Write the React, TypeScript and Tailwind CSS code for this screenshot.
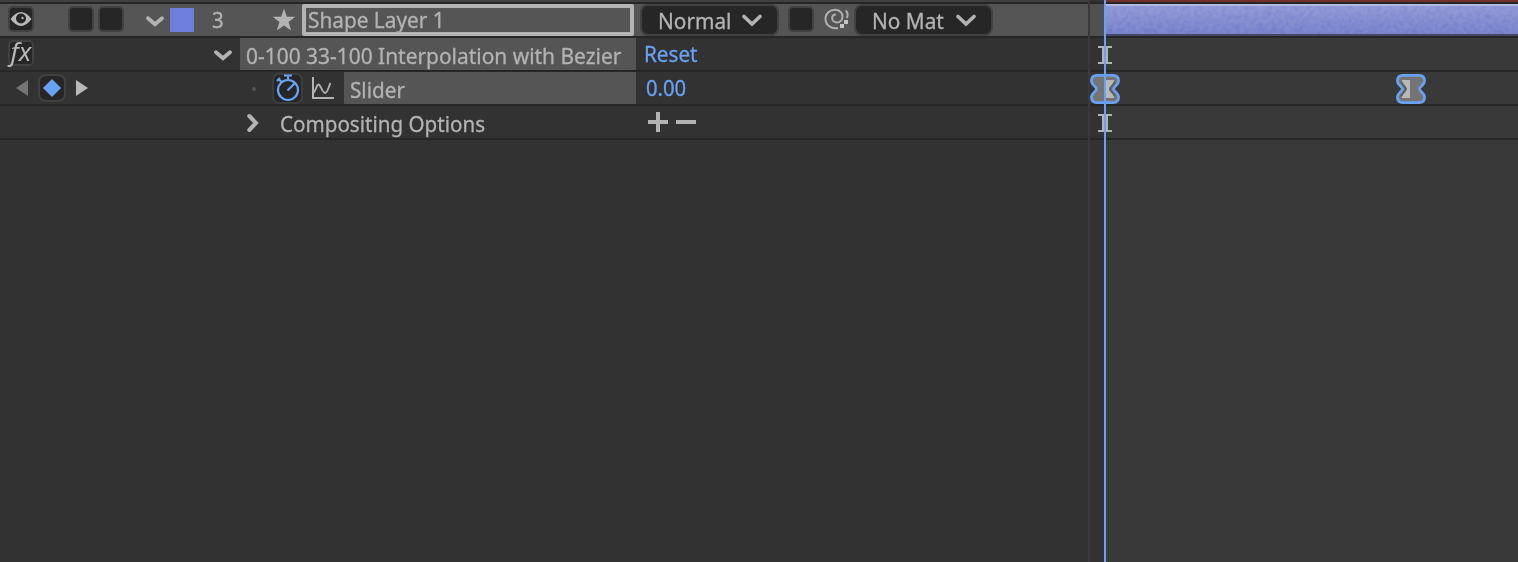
import type { ReactNode } from "react";

const ROW = "flex h-[34px] w-full shrink-0 border-b-2 border-[#262626]";

function Label({ children, className = "" }: { children: ReactNode; className?: string }) {
  return (
    <span className={`block origin-left whitespace-nowrap leading-8 [-webkit-text-stroke:0.3px_currentColor] ${className}`}>
      {children}
    </span>
  );
}

function Switch({ className = "", children }: { className?: string; children?: ReactNode }) {
  return (
    <div className={`flex size-[26px] shrink-0 items-center justify-center rounded-[5px] border-2 border-[#414141] bg-[#262626] ${className}`}>
      {children}
    </div>
  );
}

function Chevron({ className = "", large = false }: { className?: string; large?: boolean }) {
  return (
    <svg
      className={`shrink-0 ${className}`}
      width={large ? 20 : 18}
      height={large ? 13 : 11}
      viewBox={large ? "0 0 20 13" : "0 0 18 11"}
      fill="none"
      stroke="#b3b3b3"
      strokeWidth={large ? 3.6 : 3.8}
      strokeLinecap="round"
    >
      <path d={large ? "M2 2.500 10 10 18 2.500" : "M2 2.300 9 8.300 16 2.300"} />
    </svg>
  );
}

function IBeam() {
  return (
    <svg className="ml-[8px] mt-[8px] shrink-0" width="14" height="18" viewBox="0 0 14 18" fill="#b3b3b3">
      <path d="M0 0h14v2H10v14h4v2H0v-2h4V2H0z" />
    </svg>
  );
}

function Keyframe({ side, className }: { side: "left" | "right"; className: string }) {
  return (
    <svg className={`shrink-0 ${className}`} width="30" height="30" viewBox="0 0 30 30">
      <path
        d="M7 1.400H23Q28.600 1.600 28.600 7C28.600 11 23.500 12.500 23.500 15S28.600 19 28.600 23Q28.600 28.600 23 28.600H7Q1.400 28.600 1.400 23C1.400 19 6.500 17.500 6.500 15S1.400 11 1.400 7Q1.400 1.400 7 1.400Z"
        fill="#747474"
        stroke="#69a2f4"
        strokeWidth="2.800"
      />
      {side === "right" ? (
        <path d="M15 6h9v1.500C24 11 19 12 19 15s5 4 5 7.500V24h-9z" fill="#b9b9b9" />
      ) : (
        <path d="M14 6H6v1.500C6 11 10.500 12 10.500 15S6 19 6 22.500V24h8z" fill="#b9b9b9" />
      )}
      {side === "right" ? (
        <path d="M24.500 8C24 11.500 20.200 12.500 20.200 15s3.800 3.500 4.300 7" fill="none" stroke="#5f5f5f" strokeWidth="2" />
      ) : (
        <path d="M5.500 8C6 11.500 9.800 12.500 9.800 15S6 18.500 5.500 22" fill="none" stroke="#5f5f5f" strokeWidth="2" />
      )}
    </svg>
  );
}

function Dropdown({ text, className, gap }: { text: string; className: string; gap: string }) {
  return (
    <div className={`flex h-[32px] shrink-0 rounded-[8px] border-2 border-[#414141] bg-[#262626] pl-[16px] ${className}`}>
      <div className={gap}>
        <Label className="mt-[-2px] scale-x-[0.945]">{text}</Label>
      </div>
      <Chevron large className="mt-[8px]" />
    </div>
  );
}

function LayerRow() {
  return (
    <div className={`${ROW} bg-[#555555]`}>
      <Switch className="ml-[8px] mt-[2px]">
        <svg width="22" height="16" viewBox="0 0 22 16" className="shrink-0">
          <path d="M.5 8Q11-6 21.500 8 11 22 .5 8Z" fill="#b9b9b9" />
          <circle cx="11" cy="7.500" r="5" fill="#262626" />
          <circle cx="12.500" cy="7" r="1.200" fill="#b9b9b9" />
        </svg>
      </Switch>
      <Switch className="ml-[34px] mt-[2px]" />
      <Switch className="ml-[4px] mt-[2px]" />
      <Chevron className="ml-[22px] mt-[12px]" />
      <div className="ml-[6px] mt-[4px] size-6 shrink-0 bg-[#6e7edc]" />
      <div className="ml-[18px] w-[60px] shrink-0">
        <Label className="mt-[-1px] scale-x-[0.93]">3</Label>
      </div>
      <svg className="mt-[4px] shrink-0" width="24" height="24" viewBox="0 0 24 24" fill="#b3b3b3">
        <path d="m12 .8 2.900 8h8.500l-6.800 5.100 2.500 8.700-7.100-5-7.100 5 2.500-8.700L.6 8.800h8.500z" />
      </svg>
      <div className="ml-[6px] h-8 w-[332px] shrink-0 rounded-[2px] border-4 border-[#b3b3b3] pl-[2px]">
        <Label className="mt-[-5px] scale-x-[0.945]">Shape Layer 1</Label>
      </div>
      <Dropdown text="Normal" className="ml-[6px] w-[139px]" gap="w-[84px]" />
      <Switch className="ml-[9px] mt-[2px]" />
      <svg className="ml-[10px] mt-[4px] shrink-0" width="26" height="24" viewBox="0 0 26 24" fill="none" stroke="#b0b0b0" strokeWidth="2">
        <path d="M14 20C7.500 21.500 1.500 17 1.500 11 1.500 5.500 6 1.700 11 1.700c4.500 0 7.500 3.200 7.500 6.800 0 3.500-2.500 6-5.500 6-2.700 0-4.800-1.800-4.800-4.200 0-2.200 1.500-3.800 3.600-3.800" />
        <path d="M21.800 2.500q3 3.500 1 7.500" />
        <path d="M20 12h4v4h-4zM16 16h4v4h-4z" fill="#c4c4c4" stroke="none" />
      </svg>
      <Dropdown text="No Mat" className="ml-[4px] w-[139px]" gap="w-[84px]" />
    </div>
  );
}

function EffectRow() {
  return (
    <div className={ROW}>
      <Switch className="ml-[8px] mt-[2px]">
        <span className="mt-[-5px] block text-[26px] italic leading-none text-[#b8b8b8]">fx</span>
      </Switch>
      <Chevron className="ml-[180px] mt-[12px]" />
      <div className="ml-[8px] h-8 w-[396px] shrink-0 bg-[#555555] pl-[6px]">
        <Label className="mt-[1px] scale-x-[0.951]">0-100 33-100 Interpolation with Bezier</Label>
      </div>
      <div className="ml-[8px] text-[#69a2f4]">
        <Label className="mt-[-1px] scale-x-[0.94]">Reset</Label>
      </div>
    </div>
  );
}

function SliderRow() {
  return (
    <div className={ROW}>
      <svg className="ml-[16px] mt-[8px] shrink-0" width="12" height="16" fill="#747474"><path d="M12 0v16L0 8z" /></svg>
      <div className="ml-[10px] mt-[2px] flex size-[28px] shrink-0 items-center justify-center rounded-[8px] border-2 border-[#414141] bg-[#262626]">
        <svg width="18" height="18" className="shrink-0" fill="#69a2f4"><path d="M9 0 18 9 9 18 0 9z" /></svg>
      </div>
      <svg className="ml-[10px] mt-[8px] shrink-0" width="12" height="16" fill="#b8b8b8"><path d="M0 0v16l12-8z" /></svg>
      <div className="ml-[164px] mt-[15px] size-1 shrink-0 rounded-full bg-[#555555]" />
      <div className="ml-[16px] mt-px flex size-[31px] shrink-0 items-center justify-center rounded-[7px] border-2 border-[#3d3d3d] bg-[#262626]">
        <svg width="24" height="27" viewBox="0 0 24 27" fill="none" stroke="#69a2f4" strokeWidth="2.200" className="mt-[-2px] shrink-0">
          <circle cx="12" cy="16" r="10" />
          <path d="M8 1.500h8M12 1.500v4M2 4.500l4 4M1 7l3-3M11.500 16.500 18.500 9.500" />
        </svg>
      </div>
      <svg className="ml-[9px] mt-[5px] shrink-0" width="22" height="23" viewBox="0 0 22 23" fill="none" stroke="#b3b3b3" strokeWidth="2">
        <path d="M1 0v21h21" />
        <path d="M1.500 16C4.500 12.500 4.500 7.500 6.500 7.500s4 8.500 6.500 8.500 3-5 5.500-10" strokeWidth="1.800" />
      </svg>
      <div className="ml-[10px] h-8 w-[292px] shrink-0 bg-[#555555] pl-[6px]">
        <Label className="mt-[1px] scale-x-[0.94]">Slider</Label>
      </div>
      <div className="ml-[10px] text-[#69a2f4]">
        <Label className="mt-[-1px] scale-x-[0.92]">0.00</Label>
      </div>
    </div>
  );
}

function CompositingRow() {
  return (
    <div className={ROW}>
      <svg className="ml-[247px] mt-[7px] shrink-0" width="12" height="20" viewBox="0 0 12 20" fill="none" stroke="#b3b3b3" strokeWidth="4">
        <path d="M2.300 3 9 10 2.300 17" strokeLinecap="round" />
      </svg>
      <div className="ml-[21px] w-[368px] shrink-0">
        <Label className="mt-[1px] scale-x-[0.936]">Compositing Options</Label>
      </div>
      <svg className="mt-[6px] shrink-0" width="48" height="20" viewBox="0 0 48 20" fill="#b3b3b3">
        <path d="M8 0h4v8h8v4h-8v8H8v-8H0V8h8zM28 8h20v4H28z" />
      </svg>
    </div>
  );
}

function LayerBar() {
  return (
    <div className="relative ml-[14px] h-8 flex-1 border-b-2 border-t-2 border-b-[#464867] border-t-[#b5b8dd] bg-linear-to-b from-[#8790d3] to-[#6f79c8]">
      <svg className="absolute inset-0 size-full opacity-15 mix-blend-overlay">
        <filter id="grain">
          <feTurbulence type="fractalNoise" baseFrequency=".22" numOctaves="2" />
          <feColorMatrix values="1 0 0 0 0  1 0 0 0 0  1 0 0 0 0  0 0 0 0 1" />
        </filter>
        <rect width="100%" height="100%" filter="url(#grain)" />
      </svg>
    </div>
  );
}

export default function App() {
  return (
    <div className="flex h-[562px] w-[1518px] overflow-hidden bg-[#323232] font-['Noto_Sans',sans-serif] text-[22px] text-[#b3b3b3]">
      <div className="flex w-[1088px] shrink-0 flex-col">
        <div className="h-1 shrink-0 border-b-2 border-[#262626] bg-[#404040]" />
        <LayerRow />
        <EffectRow />
        <SliderRow />
        <CompositingRow />
      </div>
      <div className="relative flex flex-1 flex-col border-l-2 border-[#393939] bg-linear-to-r from-[#323232] from-[14px] to-[#393939] to-[14px]">
        <div className="flex h-1 shrink-0 border-b-2 border-[#262626] pl-[14px]">
          <div className="flex-1 bg-[#74302f]" />
        </div>
        <div className={`${ROW} bg-[#505050]`}><LayerBar /></div>
        <div className={ROW}><IBeam /></div>
        <div className={ROW}>
          <Keyframe side="right" className="mt-[2px]" />
          <Keyframe side="left" className="ml-[276px] mt-[2px]" />
        </div>
        <div className={ROW}><IBeam /></div>
        <div className="absolute inset-y-0 left-[14px] w-[2px] bg-[#69a2f4]" />
      </div>
    </div>
  );
}
